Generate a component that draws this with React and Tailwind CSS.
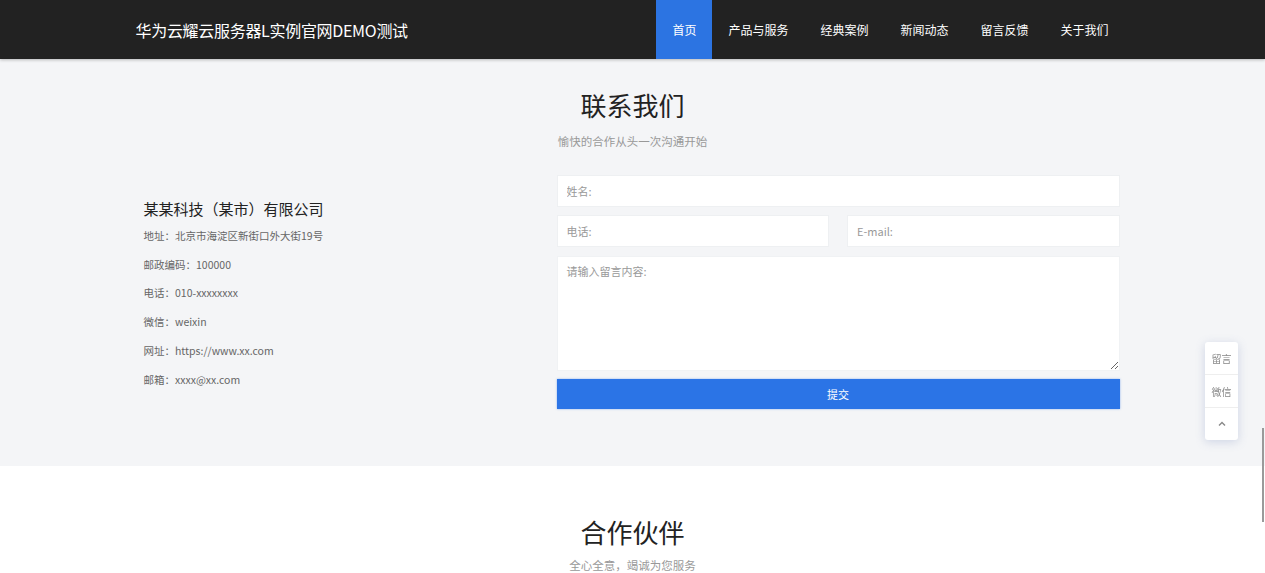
import React from "react";

const navItems = ["首页", "产品与服务", "经典案例", "新闻动态", "留言反馈", "关于我们"];
const infoLines = [
  "地址：北京市海淀区新街口外大街19号",
  "邮政编码：100000",
  "电话：010-xxxxxxxx",
  "微信：weixin",
  "网址：https://www.xx.com",
  "邮箱：xxxx@xx.com",
];

export default function App() {
  return (
    <div className="min-h-[573px] bg-white font-['Noto_Sans_CJK_SC','Noto_Sans',sans-serif] text-[#333]">
      <header className="relative z-10 h-[59px] bg-[#222222] shadow-[0_1px_3px_rgba(0,0,0,0.25)]">
        <div className="mx-auto flex h-full w-[1000px] items-center justify-between pl-[3px] pr-[8px]">
          <div className="text-[16px] tracking-[-0.3px] text-white">华为云耀云服务器L实例官网DEMO测试</div>
          <nav className="flex h-full">
            {navItems.map((item, i) => (
              <a
                key={item}
                className={
                  "flex h-full items-center px-4 text-[12px] text-white " +
                  (i === 0 ? "bg-[#2c74e2]" : "")
                }
              >
                {item}
              </a>
            ))}
          </nav>
        </div>
      </header>

      <section className="bg-[#f4f5f7] pt-[28px] pb-[57px]">
        <div className="mx-auto w-[998px] px-3">
          <h2 className="text-center text-[26px] leading-[36px] text-[#222]">联系我们</h2>
          <p className="mt-2 text-center text-[11.5px] leading-[20px] text-[#999]">愉快的合作从头一次沟通开始</p>
          <div className="mt-[24px] flex">
            <div className="-ml-[2px] flex-1 pt-[22px]">
              <h3 className="text-[15px] leading-[24px] text-[#222]">某某科技（某市）有限公司</h3>
              <ul className="mt-[1px] text-[10.5px] leading-[28.7px] text-[#666]">
                {infoLines.map((l) => (
                  <li key={l}>{l}</li>
                ))}
              </ul>
            </div>
            <form className="flex w-[563px] flex-col">
              <input
                className="h-[32px] border border-[#eef0f2] bg-white px-[9px] text-[11px] outline-none placeholder:text-[#999]"
                placeholder="姓名:"
              />
              <div className="mt-[8px] flex gap-[18px]">
                <input
                  className="h-[32px] min-w-0 flex-1 border border-[#eef0f2] bg-white px-[9px] text-[11px] outline-none placeholder:text-[#999]"
                  placeholder="电话:"
                />
                <input
                  className="h-[32px] min-w-0 flex-1 border border-[#eef0f2] bg-white px-[9px] text-[11px] outline-none placeholder:text-[#999]"
                  placeholder="E-mail:"
                />
              </div>
              <textarea
                className="mt-[9px] h-[115px] border border-[#f0f2f4] bg-white px-[9px] py-[6px] text-[11px] outline-none placeholder:text-[#999]"
                placeholder="请输入留言内容:"
              />
              <button
                type="button"
                className="mt-[8px] h-[30px] bg-[#2b74e6] text-[11px] text-white shadow-[0_0_2px_rgba(43,116,230,0.5)]"
              >
                提交
              </button>
            </form>
          </div>
        </div>
      </section>

      <section className="pt-[48px] pb-4">
        <h2 className="text-center text-[26px] leading-[36px] text-[#222]">合作伙伴</h2>
        <p className="mt-[5px] text-center text-[11.5px] leading-[20px] text-[#999]">全心全意，竭诚为您服务</p>
      </section>

      <div className="fixed left-[1205px] top-[342px] flex w-[33px] flex-col rounded-[3px] bg-white text-[10px] text-[#888] shadow-[0_2px_10px_rgba(120,140,190,0.3)]">
        <div className="flex h-[33px] items-center justify-center border-b border-[#eee]">留言</div>
        <div className="flex h-[33px] items-center justify-center border-b border-[#eee]">微信</div>
        <div className="flex h-[32px] items-center justify-center">
          <svg width="8" height="6" viewBox="0 0 8 6" fill="none" stroke="#888" strokeWidth="1.4">
            <path d="M1 4.5 L4 1.5 L7 4.5" />
          </svg>
        </div>
      </div>

      <div className="fixed left-[1262px] top-[428px] h-[94px] w-[2px] bg-[#9a9a9a]" />
    </div>
  );
}
